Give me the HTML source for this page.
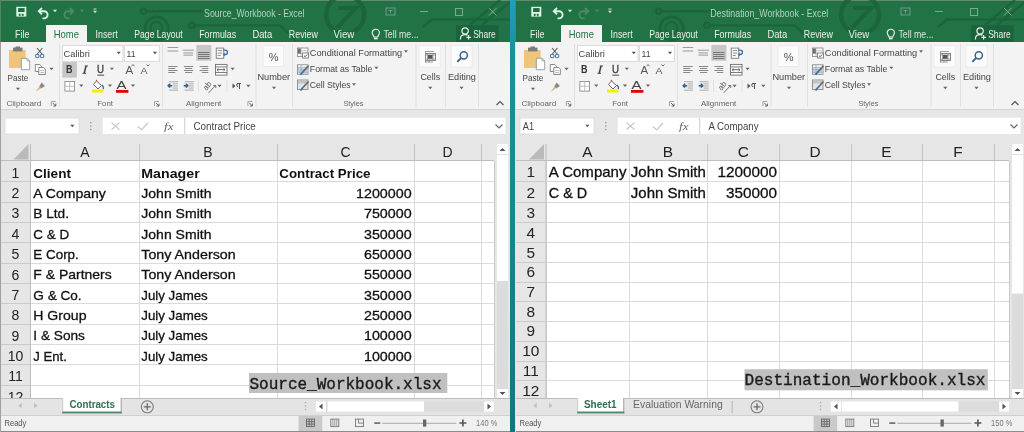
<!DOCTYPE html><html><head><meta charset="utf-8"><style>html,body{margin:0;padding:0;width:1024px;height:432px;overflow:hidden;background:#1b8a9c;font-family:"Liberation Sans",sans-serif}svg{display:block;will-change:transform}</style></head><body><div style="position:absolute;left:0;top:0;width:1024px;height:432px;overflow:hidden;filter:blur(0.4px)"><div style="position:absolute;left:510px;top:0;width:5px;height:432px;background:linear-gradient(#22a0b5,#1e8f9a 12%,#1a8a90 37%,#177480)"></div><svg style="position:absolute;left:0;top:0" width="510" height="432" viewBox="0 0 510 432"><rect x="0" y="0" width="510" height="42" fill="#217346" /><rect x="0" y="0" width="510" height="1" fill="#5e8d71" /><rect x="0" y="1" width="510" height="1" fill="#2a6a47" /><rect x="0" y="0" width="1" height="42" fill="#4f8466" /><g stroke="#1b6139" stroke-width="2.4" fill="none" opacity="0.8"><circle cx="143.5" cy="11.3" r="2.6"/><path d="M146 11.3 H204"/><circle cx="191.8" cy="25.4" r="2.6"/><path d="M194.4 25.4 H280 L296 41"/><circle cx="156.6" cy="28.5" r="11.6" stroke-width="2.8"/><circle cx="156.4" cy="28" r="6" stroke-width="2"/><circle cx="345.1" cy="14.6" r="19" stroke-width="4.5"/><path d="M338 8 H356 L337 28" stroke-width="4"/><path d="M423 27 L432 19.5 H510"/><path d="M470 25 L500 0 M482 25 L510 2"/></g><rect x="16.3" y="6.8" width="10" height="9.8" fill="#dcf5e5"/><rect x="18.1" y="8.1" width="6.5" height="3.9" fill="#1f6a42"/><rect x="18.8" y="13.8" width="1.8" height="2.1" fill="#1f6a42"/><rect x="21.8" y="13.8" width="1.8" height="2.1" fill="#1f6a42"/><g transform="translate(37,7)"><path d="M2.5 4.2 H7 A3.6 3.6 0 0 1 7 11.4 H5.5" fill="none" stroke="#dcf5e5" stroke-width="1.9"/><path d="M5 1 L1.8 4.2 L5 7.4" fill="none" stroke="#dcf5e5" stroke-width="1.9"/></g><path d="M52.9 9.8 H57.1 L55 12.2Z" fill="#d8e8de"/><g transform="translate(63,7)"><path d="M9.5 4.2 H5 A3.6 3.6 0 0 0 5 11.4 H6.5" fill="none" stroke="#4c8b66" stroke-width="1.9"/><path d="M7 1 L10.2 4.2 L7 7.4" fill="none" stroke="#4c8b66" stroke-width="1.9"/></g><path d="M79.9 9.8 H84.1 L82 12.2Z" fill="#4c8b66"/><rect x="93.5" y="8.5" width="3" height="1" fill="#cfe0d6" /><path d="M93.0 10.8 H97.0 L95 13.2Z" fill="#cfe0d6"/><text x="204.10" y="17.00" font-family="'Liberation Sans'" font-size="10.5" fill="#b3d3be" textLength="100.40" lengthAdjust="spacingAndGlyphs" >Source_Workbook - Excel</text><rect x="386" y="8" width="9" height="7" fill="none" stroke="#6c9e80" stroke-width="1"/><path d="M388.5 10.5 H392.5 M390.5 10.5 V13.5" stroke="#6c9e80"/><rect x="420" y="11" width="8" height="1" fill="#7aa98c" /><rect x="455.5" y="8.5" width="7" height="7" fill="none" stroke="#7aa98c" stroke-width="1"/><path d="M489 8 L496.5 15.5 M496.5 8 L489 15.5" stroke="#7aa98c" stroke-width="1"/><rect x="46" y="25" width="41" height="17" fill="#f3f3f3" /><text x="15.10" y="37.70" font-family="'Liberation Sans'" font-size="10.2" fill="#e9f2ec" textLength="14.40" lengthAdjust="spacingAndGlyphs" >File</text><text x="95.50" y="37.70" font-family="'Liberation Sans'" font-size="10.2" fill="#e9f2ec" textLength="22.20" lengthAdjust="spacingAndGlyphs" >Insert</text><text x="134.30" y="37.70" font-family="'Liberation Sans'" font-size="10.2" fill="#e9f2ec" textLength="48.40" lengthAdjust="spacingAndGlyphs" >Page Layout</text><text x="199.20" y="37.70" font-family="'Liberation Sans'" font-size="10.2" fill="#e9f2ec" textLength="37.00" lengthAdjust="spacingAndGlyphs" >Formulas</text><text x="252.40" y="37.70" font-family="'Liberation Sans'" font-size="10.2" fill="#e9f2ec" textLength="19.80" lengthAdjust="spacingAndGlyphs" >Data</text><text x="288.80" y="37.70" font-family="'Liberation Sans'" font-size="10.2" fill="#e9f2ec" textLength="29.10" lengthAdjust="spacingAndGlyphs" >Review</text><text x="333.50" y="37.70" font-family="'Liberation Sans'" font-size="10.2" fill="#e9f2ec" textLength="20.80" lengthAdjust="spacingAndGlyphs" >View</text><text x="53.80" y="37.70" font-family="'Liberation Sans'" font-size="10.2" fill="#217346" textLength="25.20" lengthAdjust="spacingAndGlyphs" >Home</text><g transform="translate(371.6,28.6)"><path d="M4.2 0.6 A3.6 3.6 0 0 1 7.8 4.2 C7.8 6 6.3 6.8 6.1 8.4 H2.3 C2.1 6.8 0.6 6 0.6 4.2 A3.6 3.6 0 0 1 4.2 0.6Z" fill="none" stroke="#e9f2ec" stroke-width="1.1"/><rect x="2.4" y="9" width="3.6" height="1.8" fill="#e9f2ec"/></g><text x="383.50" y="37.70" font-family="'Liberation Sans'" font-size="10.2" fill="#d9e8de" textLength="35.00" lengthAdjust="spacingAndGlyphs" >Tell me...</text><rect x="456" y="25.3" width="42.5" height="16.7" fill="#1a633d" /><g transform="translate(459.6,27)"><circle cx="5.5" cy="4" r="3.2" fill="none" stroke="#e9f2ec" stroke-width="1.2"/><path d="M0.8 12.4 C0.8 8.6 2.8 7.6 5.5 7.6 C6.6 7.6 7.4 7.8 8 8.1" fill="none" stroke="#e9f2ec" stroke-width="1.2"/><path d="M9 8 V12.6 M6.8 10.3 H11.4" stroke="#e9f2ec" stroke-width="1.2"/></g><text x="473.20" y="37.80" font-family="'Liberation Sans'" font-size="10.2" fill="#e3f5e9" textLength="22.60" lengthAdjust="spacingAndGlyphs" >Share</text><rect x="0" y="42" width="510" height="67" fill="#f3f3f3" /><rect x="0" y="109" width="510" height="1" fill="#d5d5d5" /><rect x="59" y="44" width="1" height="63" fill="#e0e0e0" /><rect x="162" y="44" width="1" height="63" fill="#e0e0e0" /><rect x="255.5" y="44" width="1" height="63" fill="#e0e0e0" /><rect x="292" y="44" width="1" height="63" fill="#e0e0e0" /><rect x="415.5" y="44" width="1" height="63" fill="#e0e0e0" /><rect x="445" y="44" width="1" height="63" fill="#e0e0e0" /><rect x="478" y="44" width="1" height="63" fill="#e0e0e0" /><rect x="9" y="50" width="16.6" height="18" fill="#efc57c" /><rect x="13" y="47.6" width="9.5" height="3.8" fill="#7a7a7a" /><rect x="15.5" y="46.5" width="4.5" height="2" fill="#7a7a7a" /><path d="M21.3 58.3 H27 L29.7 61 V69.7 H21.3Z" fill="#fff" stroke="#8a8a8a" stroke-width="0.8"/><path d="M27 58.3 V61 H29.7" fill="none" stroke="#8a8a8a" stroke-width="0.7"/><text x="7.50" y="80.75" font-family="'Liberation Sans'" font-size="9.3" fill="#444" textLength="20.80" lengthAdjust="spacingAndGlyphs" >Paste</text><path d="M15.9 87.8 H20.1 L18 90.2Z" fill="#666"/><g transform="translate(35,48)"><path d="M2 0 L7.5 6.5 M7.4 0 L1.9 6.5" stroke="#5a5a5a" stroke-width="1.1"/><circle cx="2.3" cy="8" r="1.8" fill="none" stroke="#4d79a8" stroke-width="1.1"/><circle cx="7.1" cy="8" r="1.8" fill="none" stroke="#4d79a8" stroke-width="1.1"/></g><g transform="translate(34.8,64)"><path d="M0.5 0.5 H5 L6.5 2 V7.5 H0.5Z" fill="#fff" stroke="#7a7a7a" stroke-width="0.9"/><path d="M4 3.5 H9 L10.5 5 V10.5 H4Z" fill="#fff" stroke="#7a7a7a" stroke-width="0.9"/><path d="M5.5 6.5 H9 M5.5 8.5 H9" stroke="#aaa" stroke-width="0.8"/></g><path d="M49.4 67.8 H53.6 L51.5 70.2Z" fill="#666"/><g transform="translate(35.6,82)"><path d="M6 0.5 L9.4 3.9 L5.5 6.5 L3.5 4.5Z" fill="#8a8a8a"/><path d="M0.5 9.5 L3.5 4.5 L5.5 6.5Z" fill="#e9c98f"/><path d="M1.5 8.5 L4 5.5" stroke="#cfa860" stroke-width="0.8"/></g><text x="6.40" y="105.80" font-family="'Liberation Sans'" font-size="8" fill="#666" textLength="35.00" lengthAdjust="spacingAndGlyphs" >Clipboard</text><path d="M51.3 101.5 H55.8 M51.3 101.5 V106" stroke="#9a9a9a" stroke-width="0.9" fill="none"/><path d="M52.8 103 L55.8 106 M55.8 103.6 V106 H53.4" stroke="#666" stroke-width="1" fill="none"/><path d="M154.5 101.5 H159 M154.5 101.5 V106" stroke="#9a9a9a" stroke-width="0.9" fill="none"/><path d="M156 103 L159 106 M159 103.6 V106 H156.6" stroke="#666" stroke-width="1" fill="none"/><path d="M247.9 101.5 H252.4 M247.9 101.5 V106" stroke="#9a9a9a" stroke-width="0.9" fill="none"/><path d="M249.4 103 L252.4 106 M252.4 103.6 V106 H250.0" stroke="#666" stroke-width="1" fill="none"/><rect x="62.5" y="45.5" width="60.5" height="15.9" fill="#fff" stroke="#dadada" stroke-width="1"/><rect x="124.4" y="45.5" width="35" height="15.9" fill="#fff" stroke="#dadada" stroke-width="1"/><text x="63.50" y="56.75" font-family="'Liberation Sans'" font-size="9.5" fill="#444" textLength="26.40" lengthAdjust="spacingAndGlyphs" >Calibri</text><path d="M116.65 51.8 H120.85 L118.75 54.2Z" fill="#555"/><text x="126.50" y="56.75" font-family="'Liberation Sans'" font-size="9.5" fill="#444" textLength="9.00" lengthAdjust="spacingAndGlyphs" >11</text><path d="M152.9 51.8 H157.1 L155 54.2Z" fill="#555"/><rect x="62.25" y="62" width="14.65" height="15.6" fill="#c6c6c6" /><text x="66.00" y="73.25" font-family="'Liberation Sans'" font-size="10" fill="#333" font-weight="700" textLength="6.50" lengthAdjust="spacingAndGlyphs" >B</text><path d="M86 66 L84.2 73.3" stroke="#444" stroke-width="1.5"/><path d="M84.8 66 H88 M82.5 73.3 H86" stroke="#444" stroke-width="1"/><text x="97.00" y="73.30" font-family="'Liberation Sans'" font-size="10.6" fill="#3a3a3a" textLength="7.00" lengthAdjust="spacingAndGlyphs" stroke="#3a3a3a" stroke-width="0.3">U</text><rect x="97.3" y="74.6" width="6.8" height="1.1" fill="#555" /><path d="M109.80000000000001 67.7 H114.0 L111.9 70.10000000000001Z" fill="#666"/><text x="125.50" y="73.50" font-family="'Liberation Sans'" font-size="10.2" fill="#555" textLength="7.60" lengthAdjust="spacingAndGlyphs" >A</text><path d="M131.5 66 L133 64.6 L134.5 66" stroke="#555" fill="none" stroke-width="0.9"/><text x="140.50" y="73.50" font-family="'Liberation Sans'" font-size="9.2" fill="#555" textLength="7.00" lengthAdjust="spacingAndGlyphs" >A</text><path d="M146.5 64.5 L148 66 L149.5 64.5" stroke="#555" fill="none" stroke-width="0.9"/><rect x="64.9" y="81.5" width="9.6" height="9.6" fill="#fff" stroke="#8c8c8c" stroke-width="0.9"/><path d="M69.7 81.5 V91.1 M64.9 86.3 H74.5" stroke="#b8b8b8" stroke-width="0.9"/><path d="M79.15 84.55 H83.35 L81.25 86.95Z" fill="#666"/><g transform="translate(92,79.5)"><path d="M4.5 1.5 L9.5 6 L6 9.5 L1.5 5Z" fill="#fff" stroke="#6a6a6a" stroke-width="1"/><path d="M4.5 1.5 V0.3" stroke="#c04040" stroke-width="1.2"/><path d="M10 5.5 C11.8 7.5 12 8.5 11 9.5" fill="none" stroke="#3b6ea5" stroke-width="1.3"/></g><rect x="92" y="89.5" width="11.5" height="3" fill="#f2f200" /><path d="M107.9 84.55 H112.1 L110 86.95Z" fill="#666"/><text x="116.40" y="88.90" font-family="'Liberation Sans'" font-size="10.5" fill="#444" textLength="10.00" lengthAdjust="spacingAndGlyphs" >A</text><rect x="116" y="90" width="12.4" height="2.8" fill="#e30000" /><path d="M130.9 84.55 H135.1 L133 86.95Z" fill="#666"/><text x="97.30" y="105.80" font-family="'Liberation Sans'" font-size="8" fill="#666" textLength="15.60" lengthAdjust="spacingAndGlyphs" >Font</text><rect x="167.6" y="47" width="10.6" height="1" fill="#9a9a9a"/><rect x="167.6" y="50.5" width="10.6" height="1" fill="#9a9a9a"/><rect x="182.6" y="49.7" width="11.3" height="1" fill="#999"/><rect x="183.4" y="52.4" width="9.7" height="1" fill="#999"/><rect x="183.4" y="54.6" width="9.7" height="1" fill="#999"/><rect x="196.4" y="45" width="15" height="15.75" fill="#c6c6c6" /><rect x="198" y="52" width="11.5" height="1" fill="#777"/><rect x="198" y="54" width="11.5" height="1" fill="#777"/><rect x="198" y="56" width="11.5" height="1" fill="#777"/><rect x="198" y="58" width="11.5" height="1" fill="#777"/><g transform="translate(215.75,47.6)"><rect x="0.5" y="0.5" width="7.5" height="10.2" fill="#fff" stroke="#7a7a7a" stroke-width="0.9"/><path d="M2 3 H6.5 M2 5.5 H6.5 M2 8 H5" stroke="#7a7a7a" stroke-width="0.9"/><path d="M7.5 2.5 H9.5 A2.2 2.2 0 0 1 9.5 6.9 H7.8" fill="none" stroke="#3b6ea5" stroke-width="1.3"/><path d="M9 5.5 L7.5 6.9 L9 8.3" fill="none" stroke="#3b6ea5" stroke-width="1"/></g><rect x="168.25" y="66" width="9.4" height="1" fill="#888"/><rect x="168.25" y="68" width="7" height="1" fill="#888"/><rect x="168.25" y="70" width="9.4" height="1" fill="#888"/><rect x="168.25" y="72" width="7" height="1" fill="#888"/><rect x="183.9" y="66" width="9.4" height="1" fill="#888"/><rect x="185.1" y="68" width="6.999999999999999" height="1" fill="#888"/><rect x="183.9" y="70" width="9.4" height="1" fill="#888"/><rect x="185.1" y="72" width="6.999999999999999" height="1" fill="#888"/><rect x="199.5" y="66" width="8.8" height="1" fill="#888"/><rect x="201.9" y="68" width="6.4" height="1" fill="#888"/><rect x="199.5" y="70" width="8.8" height="1" fill="#888"/><rect x="201.9" y="72" width="6.4" height="1" fill="#888"/><g transform="translate(215,63.9)"><rect x="0.5" y="0.5" width="11.5" height="10.7" fill="#fff" stroke="#6e6e6e" stroke-width="0.9"/><path d="M0.5 3 H12 M0.5 8.6 H12" stroke="#6e6e6e" stroke-width="0.9"/><path d="M2.5 5.8 H9.5" stroke="#555" stroke-width="0.9"/><path d="M3.5 4.5 L2 5.8 L3.5 7.1 M8.5 4.5 L10 5.8 L8.5 7.1" fill="none" stroke="#555" stroke-width="0.9"/></g><path d="M230.5 67.8 H234.7 L232.6 70.2Z" fill="#666"/><g transform="translate(167,80.75)"><rect x="2" y="0.5" width="9" height="1" fill="#aaa"/><rect x="6" y="2.6" width="5" height="1" fill="#aaa"/><rect x="6" y="4.7" width="5" height="1" fill="#aaa"/><rect x="6" y="6.8" width="5" height="1" fill="#aaa"/><rect x="2" y="8.9" width="9" height="1" fill="#aaa"/><circle cx="3.3" cy="4.9" r="3" fill="#dfe8f2"/><path d="M5.2 4.9 H1.3 M3.1 3 L1.2 4.9 L3.1 6.8" fill="none" stroke="#3d5f86" stroke-width="1.5"/></g><g transform="translate(182.6,80.75)"><rect x="2" y="0.5" width="9" height="1" fill="#aaa"/><rect x="6" y="2.6" width="5" height="1" fill="#aaa"/><rect x="6" y="4.7" width="5" height="1" fill="#aaa"/><rect x="6" y="6.8" width="5" height="1" fill="#aaa"/><rect x="2" y="8.9" width="9" height="1" fill="#aaa"/><circle cx="3.3" cy="4.9" r="3" fill="#dfe8f2"/><path d="M1.2 4.9 H5.1 M3.3 3 L5.2 4.9 L3.3 6.8" fill="none" stroke="#3d5f86" stroke-width="1.5"/></g><rect x="198" y="80" width="1" height="12" fill="#e2e2e2" /><rect x="226.4" y="80" width="1" height="12" fill="#e2e2e2" /><text x="0" y="0" font-family="Liberation Sans" font-size="8" fill="#555" transform="translate(206.5,91) rotate(-50)">ab</text><path d="M208.5 93 L215.5 85.5" stroke="#666" stroke-width="0.9"/><path d="M213.3 85.5 H215.8 V88" fill="none" stroke="#666" stroke-width="0.9"/><path d="M217.4 84.8 H221.6 L219.5 87.2Z" fill="#666"/><g transform="translate(232,83)"><path d="M0.5 0.5 L3.5 3 L0.5 5.5Z" fill="#555"/><path d="M5 0.5 H9 M7.5 0.5 V6 M6.3 0.5 A1.6 1.6 0 0 0 6.3 3.7" stroke="#555" stroke-width="1" fill="none"/></g><path d="M246.15 84.8 H250.35 L248.25 87.2Z" fill="#666"/><text x="186.00" y="105.80" font-family="'Liberation Sans'" font-size="8" fill="#666" textLength="35.30" lengthAdjust="spacingAndGlyphs" >Alignment</text><rect x="263" y="45.8" width="20.5" height="20.6" fill="#fbfbfb" stroke="#e8e8e8" stroke-width="0.8"/><text x="268.70" y="60.70" font-family="'Liberation Sans'" font-size="10.8" fill="#555" textLength="9.80" lengthAdjust="spacingAndGlyphs" >%</text><text x="257.40" y="79.50" font-family="'Liberation Sans'" font-size="9.3" fill="#444" textLength="32.80" lengthAdjust="spacingAndGlyphs" >Number</text><path d="M271.9 86.8 H276.1 L274 89.2Z" fill="#666"/><g transform="translate(297,47.5)"><rect x="0.5" y="0.5" width="10.5" height="8.5" fill="#fff" stroke="#8a8a8a" stroke-width="0.9"/><path d="M0.5 3.3 H11 M0.5 6.1 H11 M4 0.5 V9" stroke="#b0b0b0" stroke-width="0.8"/><rect x="1" y="1" width="2.8" height="5" fill="#6e6e6e"/><rect x="5.5" y="5.5" width="6" height="5" fill="#fff" stroke="#7a7a7a" stroke-width="0.9"/><path d="M7 8.2 L8.2 9.2 L10.2 7" fill="none" stroke="#444" stroke-width="0.9"/></g><g transform="translate(297,64.3)"><rect x="0.5" y="0.5" width="10.5" height="9.5" fill="#fff" stroke="#8a8a8a" stroke-width="0.9"/><rect x="1" y="3" width="9.5" height="6.5" fill="#c9d6e6"/><path d="M0.5 3 H11 M0.5 5.5 H11 M0.5 8 H11 M4 0.5 V10" stroke="#9aa7b8" stroke-width="0.7"/><path d="M11.5 1.5 L5.5 8" stroke="#6a6a6a" stroke-width="1.8"/><path d="M5.5 8 L3.5 10.5" stroke="#3b6ea5" stroke-width="1.8"/></g><g transform="translate(297,79.5)"><rect x="0.5" y="0.5" width="10.5" height="9.5" fill="#e4e4e4" stroke="#8a8a8a" stroke-width="0.9"/><rect x="1" y="1" width="9.5" height="3" fill="#c4c4c4"/><path d="M11.5 2 L5.5 8.5" stroke="#6a6a6a" stroke-width="1.8"/><path d="M5.5 8.5 L3.5 11" stroke="#3b6ea5" stroke-width="1.8"/></g><text x="309.80" y="56.00" font-family="'Liberation Sans'" font-size="9.3" fill="#444" textLength="92.40" lengthAdjust="spacingAndGlyphs" >Conditional Formatting</text><path d="M404.0 50.3 H408.0 L406 52.7Z" fill="#666"/><text x="309.80" y="71.80" font-family="'Liberation Sans'" font-size="9.3" fill="#444" textLength="62.60" lengthAdjust="spacingAndGlyphs" >Format as Table</text><path d="M374.3 66.8 H378.3 L376.3 69.2Z" fill="#666"/><text x="309.70" y="88.30" font-family="'Liberation Sans'" font-size="9.3" fill="#444" textLength="41.00" lengthAdjust="spacingAndGlyphs" >Cell Styles</text><path d="M352.0 83.3 H356.0 L354 85.7Z" fill="#666"/><text x="343.40" y="106.00" font-family="'Liberation Sans'" font-size="8" fill="#666" textLength="20.00" lengthAdjust="spacingAndGlyphs" >Styles</text><rect x="419" y="45.5" width="21.25" height="21.5" fill="#fbfbfb" stroke="#e8e8e8" stroke-width="0.8"/><rect x="425.5" y="53.5" width="10" height="7" fill="#fff" stroke="#777" stroke-width="0.9"/><path d="M425 51.5 H434 M425.5 51 V62.5 M425 62 H433 M429 60.5 V62.5 M425 55 H435.5 M425 59 H435.5 M427.5 53.5 V60.5 M433 53.5 V60.5" fill="none" stroke="#8a8a8a" stroke-width="0.8"/><rect x="428" y="55" width="4.5" height="3.8" fill="#4f5862"/><text x="420.40" y="79.50" font-family="'Liberation Sans'" font-size="9.3" fill="#444" textLength="19.70" lengthAdjust="spacingAndGlyphs" >Cells</text><path d="M428.15 86.8 H432.35 L430.25 89.2Z" fill="#666"/><rect x="451" y="45.5" width="21.1" height="21.5" fill="#fbfbfb" stroke="#e8e8e8" stroke-width="0.8"/><g transform="translate(456.5,51)"><circle cx="7.3" cy="4.3" r="3.6" fill="none" stroke="#3f5f85" stroke-width="1.5"/><path d="M4.6 7 L0.8 10.8" stroke="#3f5f85" stroke-width="1.8"/></g><text x="447.90" y="79.50" font-family="'Liberation Sans'" font-size="9.3" fill="#444" textLength="28.10" lengthAdjust="spacingAndGlyphs" >Editing</text><path d="M459.4 86.8 H463.6 L461.5 89.2Z" fill="#666"/><path d="M496.5 105 L500 101.5 L503.5 105" fill="none" stroke="#555" stroke-width="1.2"/><rect x="0" y="110" width="510" height="27" fill="#e6e6e6" /><rect x="5" y="118" width="74" height="16" fill="#fff" stroke="#d9d9d9" stroke-width="0.8"/><path d="M70.2 124.8 H74.39999999999999 L72.3 127.2Z" fill="#555"/><circle cx="90.8" cy="122.5" r="0.8" fill="#999"/><circle cx="90.8" cy="126" r="0.8" fill="#999"/><circle cx="90.8" cy="129.5" r="0.8" fill="#999"/><rect x="102.7" y="117.7" width="81.6" height="16.3" fill="#fff"/><path d="M111.5 122.6 L119.5 129.7 M119.5 122.6 L111.5 129.7" stroke="#c2c2c2" stroke-width="1.1"/><path d="M138 126.5 L141.5 129.8 L148 123" fill="none" stroke="#c2c2c2" stroke-width="1.1"/><text x="164" y="130" font-family="Liberation Serif" font-style="italic" font-size="11" fill="#666" textLength="9.5" lengthAdjust="spacingAndGlyphs">fx</text><rect x="184" y="117.7" width="1" height="16.3" fill="#d8d8d8" /><rect x="185.5" y="117.7" width="320" height="16.3" fill="#fff" /><text x="193.50" y="129.70" font-family="'Liberation Sans'" font-size="10.4" fill="#444" textLength="62.30" lengthAdjust="spacingAndGlyphs" >Contract Price</text><path d="M495.5 124.5 L499 128 L502.5 124.5" fill="none" stroke="#666" stroke-width="1.2"/><rect x="0" y="134" width="510" height="0" fill="#e6e6e6" /><rect x="0" y="137" width="510" height="24" fill="#e6e6e6" /><rect x="0" y="161" width="31" height="237" fill="#e6e6e6" /><rect x="31" y="161" width="463" height="237" fill="#ffffff" /><rect x="31" y="181" width="463" height="1" fill="#dadada" /><rect x="0" y="181" width="30" height="1" fill="#cbcbcb" /><rect x="31" y="202" width="463" height="1" fill="#dadada" /><rect x="0" y="202" width="30" height="1" fill="#cbcbcb" /><rect x="31" y="222" width="463" height="1" fill="#dadada" /><rect x="0" y="222" width="30" height="1" fill="#cbcbcb" /><rect x="31" y="242" width="463" height="1" fill="#dadada" /><rect x="0" y="242" width="30" height="1" fill="#cbcbcb" /><rect x="31" y="263" width="463" height="1" fill="#dadada" /><rect x="0" y="263" width="30" height="1" fill="#cbcbcb" /><rect x="31" y="283" width="463" height="1" fill="#dadada" /><rect x="0" y="283" width="30" height="1" fill="#cbcbcb" /><rect x="31" y="303" width="463" height="1" fill="#dadada" /><rect x="0" y="303" width="30" height="1" fill="#cbcbcb" /><rect x="31" y="324" width="463" height="1" fill="#dadada" /><rect x="0" y="324" width="30" height="1" fill="#cbcbcb" /><rect x="31" y="344" width="463" height="1" fill="#dadada" /><rect x="0" y="344" width="30" height="1" fill="#cbcbcb" /><rect x="31" y="364" width="463" height="1" fill="#dadada" /><rect x="0" y="364" width="30" height="1" fill="#cbcbcb" /><rect x="31" y="385" width="463" height="1" fill="#dadada" /><rect x="0" y="385" width="30" height="1" fill="#cbcbcb" /><rect x="139" y="161" width="1" height="237" fill="#dadada" /><rect x="139" y="144" width="1" height="17" fill="#c4c4c4" /><rect x="277" y="161" width="1" height="237" fill="#dadada" /><rect x="277" y="144" width="1" height="17" fill="#c4c4c4" /><rect x="414" y="161" width="1" height="237" fill="#dadada" /><rect x="414" y="144" width="1" height="17" fill="#c4c4c4" /><rect x="481" y="161" width="1" height="237" fill="#dadada" /><rect x="481" y="144" width="1" height="17" fill="#c4c4c4" /><rect x="0" y="160" width="494" height="1" fill="#bfbfbf" /><rect x="30" y="144" width="1" height="254" fill="#bdbdbd" /><path d="M28.5 144 V159.5 H13.5Z" fill="#bababa"/><text x="85.00" y="156.80" font-family="'Liberation Sans'" font-size="14" fill="#222" text-anchor="middle" >A</text><text x="208.00" y="156.80" font-family="'Liberation Sans'" font-size="14" fill="#222" text-anchor="middle" >B</text><text x="345.50" y="156.80" font-family="'Liberation Sans'" font-size="14" fill="#222" text-anchor="middle" >C</text><text x="447.50" y="156.80" font-family="'Liberation Sans'" font-size="14" fill="#222" text-anchor="middle" >D</text><text x="15.50" y="177.75" font-family="'Liberation Sans'" font-size="14" fill="#222" text-anchor="middle" >1</text><text x="15.50" y="198.10" font-family="'Liberation Sans'" font-size="14" fill="#222" text-anchor="middle" >2</text><text x="15.50" y="218.45" font-family="'Liberation Sans'" font-size="14" fill="#222" text-anchor="middle" >3</text><text x="15.50" y="238.80" font-family="'Liberation Sans'" font-size="14" fill="#222" text-anchor="middle" >4</text><text x="15.50" y="259.15" font-family="'Liberation Sans'" font-size="14" fill="#222" text-anchor="middle" >5</text><text x="15.50" y="279.50" font-family="'Liberation Sans'" font-size="14" fill="#222" text-anchor="middle" >6</text><text x="15.50" y="299.85" font-family="'Liberation Sans'" font-size="14" fill="#222" text-anchor="middle" >7</text><text x="15.50" y="320.20" font-family="'Liberation Sans'" font-size="14" fill="#222" text-anchor="middle" >8</text><text x="15.50" y="340.55" font-family="'Liberation Sans'" font-size="14" fill="#222" text-anchor="middle" >9</text><text x="15.50" y="360.90" font-family="'Liberation Sans'" font-size="14" fill="#222" text-anchor="middle" >10</text><text x="15.50" y="381.25" font-family="'Liberation Sans'" font-size="14" fill="#222" text-anchor="middle" >11</text><text x="15.50" y="401.60" font-family="'Liberation Sans'" font-size="14" fill="#222" text-anchor="middle" >12</text><text x="33.30" y="177.55" font-family="'Liberation Sans'" font-size="13.6" fill="#111" font-weight="700" textLength="37.62" lengthAdjust="spacingAndGlyphs" >Client</text><text x="141.30" y="177.55" font-family="'Liberation Sans'" font-size="13.6" fill="#111" font-weight="700" textLength="58.38" lengthAdjust="spacingAndGlyphs" >Manager</text><text x="279.30" y="177.55" font-family="'Liberation Sans'" font-size="13.6" fill="#111" font-weight="700" textLength="91.22" lengthAdjust="spacingAndGlyphs" >Contract Price</text><text x="33.30" y="197.90" font-family="'Liberation Sans'" font-size="13.6" fill="#111" textLength="72.61" lengthAdjust="spacingAndGlyphs" stroke="#111" stroke-width="0.3">A Company</text><text x="141.30" y="197.90" font-family="'Liberation Sans'" font-size="13.6" fill="#111" textLength="70.16" lengthAdjust="spacingAndGlyphs" stroke="#111" stroke-width="0.3">John Smith</text><text x="356.03" y="197.90" font-family="'Liberation Sans'" font-size="13.6" fill="#111" textLength="55.67" lengthAdjust="spacingAndGlyphs" stroke="#111" stroke-width="0.3">1200000</text><text x="33.30" y="218.25" font-family="'Liberation Sans'" font-size="13.6" fill="#111" textLength="35.67" lengthAdjust="spacingAndGlyphs" stroke="#111" stroke-width="0.3">B Ltd.</text><text x="141.30" y="218.25" font-family="'Liberation Sans'" font-size="13.6" fill="#111" textLength="70.16" lengthAdjust="spacingAndGlyphs" stroke="#111" stroke-width="0.3">John Smith</text><text x="363.98" y="218.25" font-family="'Liberation Sans'" font-size="13.6" fill="#111" textLength="47.72" lengthAdjust="spacingAndGlyphs" stroke="#111" stroke-width="0.3">750000</text><text x="33.30" y="238.60" font-family="'Liberation Sans'" font-size="13.6" fill="#111" textLength="35.81" lengthAdjust="spacingAndGlyphs" stroke="#111" stroke-width="0.3">C &amp; D</text><text x="141.30" y="238.60" font-family="'Liberation Sans'" font-size="13.6" fill="#111" textLength="70.16" lengthAdjust="spacingAndGlyphs" stroke="#111" stroke-width="0.3">John Smith</text><text x="363.98" y="238.60" font-family="'Liberation Sans'" font-size="13.6" fill="#111" textLength="47.72" lengthAdjust="spacingAndGlyphs" stroke="#111" stroke-width="0.3">350000</text><text x="33.30" y="258.95" font-family="'Liberation Sans'" font-size="13.6" fill="#111" textLength="45.52" lengthAdjust="spacingAndGlyphs" stroke="#111" stroke-width="0.3">E Corp.</text><text x="141.30" y="258.95" font-family="'Liberation Sans'" font-size="13.6" fill="#111" textLength="94.34" lengthAdjust="spacingAndGlyphs" stroke="#111" stroke-width="0.3">Tony Anderson</text><text x="363.98" y="258.95" font-family="'Liberation Sans'" font-size="13.6" fill="#111" textLength="47.72" lengthAdjust="spacingAndGlyphs" stroke="#111" stroke-width="0.3">650000</text><text x="33.30" y="279.30" font-family="'Liberation Sans'" font-size="13.6" fill="#111" textLength="78.41" lengthAdjust="spacingAndGlyphs" stroke="#111" stroke-width="0.3">F &amp; Partners</text><text x="141.30" y="279.30" font-family="'Liberation Sans'" font-size="13.6" fill="#111" textLength="94.34" lengthAdjust="spacingAndGlyphs" stroke="#111" stroke-width="0.3">Tony Anderson</text><text x="363.98" y="279.30" font-family="'Liberation Sans'" font-size="13.6" fill="#111" textLength="47.72" lengthAdjust="spacingAndGlyphs" stroke="#111" stroke-width="0.3">550000</text><text x="33.30" y="299.65" font-family="'Liberation Sans'" font-size="13.6" fill="#111" textLength="48.30" lengthAdjust="spacingAndGlyphs" stroke="#111" stroke-width="0.3">G &amp; Co.</text><text x="141.30" y="299.65" font-family="'Liberation Sans'" font-size="13.6" fill="#111" textLength="66.48" lengthAdjust="spacingAndGlyphs" stroke="#111" stroke-width="0.3">July James</text><text x="363.98" y="299.65" font-family="'Liberation Sans'" font-size="13.6" fill="#111" textLength="47.72" lengthAdjust="spacingAndGlyphs" stroke="#111" stroke-width="0.3">350000</text><text x="33.30" y="320.00" font-family="'Liberation Sans'" font-size="13.6" fill="#111" textLength="53.20" lengthAdjust="spacingAndGlyphs" stroke="#111" stroke-width="0.3">H Group</text><text x="141.30" y="320.00" font-family="'Liberation Sans'" font-size="13.6" fill="#111" textLength="66.48" lengthAdjust="spacingAndGlyphs" stroke="#111" stroke-width="0.3">July James</text><text x="363.98" y="320.00" font-family="'Liberation Sans'" font-size="13.6" fill="#111" textLength="47.72" lengthAdjust="spacingAndGlyphs" stroke="#111" stroke-width="0.3">250000</text><text x="33.30" y="340.35" font-family="'Liberation Sans'" font-size="13.6" fill="#111" textLength="51.61" lengthAdjust="spacingAndGlyphs" stroke="#111" stroke-width="0.3">I &amp; Sons</text><text x="141.30" y="340.35" font-family="'Liberation Sans'" font-size="13.6" fill="#111" textLength="66.48" lengthAdjust="spacingAndGlyphs" stroke="#111" stroke-width="0.3">July James</text><text x="363.98" y="340.35" font-family="'Liberation Sans'" font-size="13.6" fill="#111" textLength="47.72" lengthAdjust="spacingAndGlyphs" stroke="#111" stroke-width="0.3">100000</text><text x="33.30" y="360.70" font-family="'Liberation Sans'" font-size="13.6" fill="#111" textLength="33.53" lengthAdjust="spacingAndGlyphs" stroke="#111" stroke-width="0.3">J Ent.</text><text x="141.30" y="360.70" font-family="'Liberation Sans'" font-size="13.6" fill="#111" textLength="66.48" lengthAdjust="spacingAndGlyphs" stroke="#111" stroke-width="0.3">July James</text><text x="363.98" y="360.70" font-family="'Liberation Sans'" font-size="13.6" fill="#111" textLength="47.72" lengthAdjust="spacingAndGlyphs" stroke="#111" stroke-width="0.3">100000</text><rect x="494" y="137" width="16" height="261" fill="#e6e6e6" /><rect x="494" y="161" width="1" height="237" fill="#c9c9c9" /><rect x="497" y="144" width="11" height="10.5" fill="#ffffff" /><rect x="497" y="154.5" width="11" height="0.8" fill="#cfcfcf" /><path d="M499.5 151 L502.5 148 L505.5 151Z" fill="#555"/><rect x="497" y="155" width="11" height="126" fill="#ffffff" /><rect x="497" y="281" width="11" height="108" fill="#dcdcdc" /><rect x="497" y="389" width="11" height="8.8" fill="#ffffff" /><path d="M499.5 392 L502.5 395 L505.5 392Z" fill="#555"/><rect x="249" y="373" width="198.3" height="20" fill="#c0c0c0" /><text x="249.50" y="388.90" font-family="'Liberation Mono'" font-size="16" fill="#1a1a1a" textLength="192.00" lengthAdjust="spacingAndGlyphs" stroke="#1a1a1a" stroke-width="0.35">Source_Workbook.xlsx</text><rect x="0" y="398" width="510" height="17" fill="#e4e4e4" /><rect x="0" y="398" width="510" height="1" fill="#bdbdbd" /><rect x="0" y="415" width="510" height="1" fill="#d0d0d0" /><path d="M21.8 402.8 L18.3 405.6 L21.8 408.4Z" fill="#c2c2c2"/><path d="M34 402.8 L37.5 405.6 L34 408.4Z" fill="#c2c2c2"/><rect x="62.2" y="398" width="59.5" height="15.5" fill="#ffffff" /><rect x="62.2" y="398" width="1" height="15.5" fill="#c8c8c8" /><rect x="120.7" y="398" width="1" height="15.5" fill="#9a9a9a" /><rect x="62.2" y="411.5" width="59.5" height="2" fill="#4f8a6e" /><text x="69.40" y="407.80" font-family="'Liberation Sans'" font-size="10.4" fill="#2f6f4f" font-weight="700" textLength="45.60" lengthAdjust="spacingAndGlyphs" >Contracts</text><circle cx="147.3" cy="406.8" r="6" fill="none" stroke="#7a7a7a" stroke-width="1.1"/><path d="M147.3 403.3 V410.3 M143.8 406.8 H150.8" stroke="#6a6a6a" stroke-width="1.3"/><circle cx="305.5" cy="402.5" r="0.8" fill="#aaa"/><circle cx="305.5" cy="406" r="0.8" fill="#aaa"/><circle cx="305.5" cy="409.5" r="0.8" fill="#aaa"/><rect x="315.8" y="401.4" width="178.2" height="10.2" fill="#dcdcdc" /><rect x="315.8" y="401.4" width="10.2" height="10.2" fill="#ffffff" /><path d="M322.5 403.5 L319 406.5 L322.5 409.5Z" fill="#555"/><rect x="327.6" y="401.4" width="96.39999999999998" height="10.2" fill="#ffffff" /><rect x="484.2" y="401.4" width="9.8" height="10.2" fill="#ffffff" /><path d="M487.5 403.5 L491 406.5 L487.5 409.5Z" fill="#555"/><rect x="0" y="416" width="510" height="15" fill="#f0f0f0" /><text x="4.50" y="425.60" font-family="'Liberation Sans'" font-size="8.2" fill="#555" textLength="21.80" lengthAdjust="spacingAndGlyphs" >Ready</text><rect x="298.6" y="416" width="23.6" height="15" fill="#c9c9c9" /><g transform="translate(306,418.6)"><rect x="0.5" y="0.5" width="8" height="7.5" fill="none" stroke="#666" stroke-width="0.9"/><path d="M0.5 3 H8.5 M0.5 5.5 H8.5 M3.2 0.5 V8 M5.8 0.5 V8" stroke="#666" stroke-width="0.9"/></g><g transform="translate(330.3,418.6)"><rect x="0.5" y="0.5" width="8" height="7.5" fill="none" stroke="#777" stroke-width="0.9"/><path d="M2.5 0.5 V8 M4.5 0.5 V8 M6.5 0.5 V8" stroke="#888" stroke-width="0.8"/></g><g transform="translate(355,418.6)"><rect x="0.5" y="0.5" width="8" height="7.5" fill="none" stroke="#777" stroke-width="0.9"/><path d="M3.5 0.5 V4.5 H8.5" fill="none" stroke="#777" stroke-width="0.9"/></g><rect x="374.3" y="422.3" width="6" height="1.6" fill="#666" /><rect x="382.4" y="422.8" width="74" height="0.9" fill="#a0a0a0" /><rect x="423" y="419.5" width="3.3" height="7.1" fill="#666" /><path d="M462.9 419.5 V426.6 M459.4 423 H466.4" stroke="#555" stroke-width="1.6"/><text x="476.10" y="425.80" font-family="'Liberation Sans'" font-size="8.2" fill="#777" textLength="21.20" lengthAdjust="spacingAndGlyphs" >140 %</text><rect x="0" y="431" width="510" height="1" fill="#8c8c8c" /><rect x="0" y="42" width="1" height="390" fill="#a0a0a0" /></svg><svg style="position:absolute;left:515px;top:0" width="510" height="432" viewBox="0 0 510 432"><rect x="0" y="0" width="510" height="42" fill="#217346" /><rect x="0" y="0" width="510" height="1" fill="#5e8d71" /><rect x="0" y="1" width="510" height="1" fill="#2a6a47" /><rect x="0" y="0" width="1" height="42" fill="#4f8466" /><g stroke="#1b6139" stroke-width="2.4" fill="none" opacity="0.8"><circle cx="143.5" cy="11.3" r="2.6"/><path d="M146 11.3 H204"/><circle cx="191.8" cy="25.4" r="2.6"/><path d="M194.4 25.4 H280 L296 41"/><circle cx="156.6" cy="28.5" r="11.6" stroke-width="2.8"/><circle cx="156.4" cy="28" r="6" stroke-width="2"/><circle cx="345.1" cy="14.6" r="19" stroke-width="4.5"/><path d="M338 8 H356 L337 28" stroke-width="4"/><path d="M423 27 L432 19.5 H510"/><path d="M470 25 L500 0 M482 25 L510 2"/></g><rect x="16.3" y="6.8" width="10" height="9.8" fill="#dcf5e5"/><rect x="18.1" y="8.1" width="6.5" height="3.9" fill="#1f6a42"/><rect x="18.8" y="13.8" width="1.8" height="2.1" fill="#1f6a42"/><rect x="21.8" y="13.8" width="1.8" height="2.1" fill="#1f6a42"/><g transform="translate(37,7)"><path d="M2.5 4.2 H7 A3.6 3.6 0 0 1 7 11.4 H5.5" fill="none" stroke="#dcf5e5" stroke-width="1.9"/><path d="M5 1 L1.8 4.2 L5 7.4" fill="none" stroke="#dcf5e5" stroke-width="1.9"/></g><path d="M52.9 9.8 H57.1 L55 12.2Z" fill="#d8e8de"/><g transform="translate(63,7)"><path d="M9.5 4.2 H5 A3.6 3.6 0 0 0 5 11.4 H6.5" fill="none" stroke="#4c8b66" stroke-width="1.9"/><path d="M7 1 L10.2 4.2 L7 7.4" fill="none" stroke="#4c8b66" stroke-width="1.9"/></g><path d="M79.9 9.8 H84.1 L82 12.2Z" fill="#4c8b66"/><rect x="93.5" y="8.5" width="3" height="1" fill="#cfe0d6" /><path d="M93.0 10.8 H97.0 L95 13.2Z" fill="#cfe0d6"/><text x="195.20" y="17.00" font-family="'Liberation Sans'" font-size="10.5" fill="#b3d3be" textLength="118.10" lengthAdjust="spacingAndGlyphs" >Destination_Workbook - Excel</text><rect x="386" y="8" width="9" height="7" fill="none" stroke="#6c9e80" stroke-width="1"/><path d="M388.5 10.5 H392.5 M390.5 10.5 V13.5" stroke="#6c9e80"/><rect x="420" y="11" width="8" height="1" fill="#7aa98c" /><rect x="455.5" y="8.5" width="7" height="7" fill="none" stroke="#7aa98c" stroke-width="1"/><path d="M489 8 L496.5 15.5 M496.5 8 L489 15.5" stroke="#7aa98c" stroke-width="1"/><rect x="46" y="25" width="41" height="17" fill="#f3f3f3" /><text x="15.10" y="37.70" font-family="'Liberation Sans'" font-size="10.2" fill="#e9f2ec" textLength="14.40" lengthAdjust="spacingAndGlyphs" >File</text><text x="95.50" y="37.70" font-family="'Liberation Sans'" font-size="10.2" fill="#e9f2ec" textLength="22.20" lengthAdjust="spacingAndGlyphs" >Insert</text><text x="134.30" y="37.70" font-family="'Liberation Sans'" font-size="10.2" fill="#e9f2ec" textLength="48.40" lengthAdjust="spacingAndGlyphs" >Page Layout</text><text x="199.20" y="37.70" font-family="'Liberation Sans'" font-size="10.2" fill="#e9f2ec" textLength="37.00" lengthAdjust="spacingAndGlyphs" >Formulas</text><text x="252.40" y="37.70" font-family="'Liberation Sans'" font-size="10.2" fill="#e9f2ec" textLength="19.80" lengthAdjust="spacingAndGlyphs" >Data</text><text x="288.80" y="37.70" font-family="'Liberation Sans'" font-size="10.2" fill="#e9f2ec" textLength="29.10" lengthAdjust="spacingAndGlyphs" >Review</text><text x="333.50" y="37.70" font-family="'Liberation Sans'" font-size="10.2" fill="#e9f2ec" textLength="20.80" lengthAdjust="spacingAndGlyphs" >View</text><text x="53.80" y="37.70" font-family="'Liberation Sans'" font-size="10.2" fill="#217346" textLength="25.20" lengthAdjust="spacingAndGlyphs" >Home</text><g transform="translate(371.6,28.6)"><path d="M4.2 0.6 A3.6 3.6 0 0 1 7.8 4.2 C7.8 6 6.3 6.8 6.1 8.4 H2.3 C2.1 6.8 0.6 6 0.6 4.2 A3.6 3.6 0 0 1 4.2 0.6Z" fill="none" stroke="#e9f2ec" stroke-width="1.1"/><rect x="2.4" y="9" width="3.6" height="1.8" fill="#e9f2ec"/></g><text x="383.50" y="37.70" font-family="'Liberation Sans'" font-size="10.2" fill="#d9e8de" textLength="35.00" lengthAdjust="spacingAndGlyphs" >Tell me...</text><rect x="456" y="25.3" width="42.5" height="16.7" fill="#1a633d" /><g transform="translate(459.6,27)"><circle cx="5.5" cy="4" r="3.2" fill="none" stroke="#e9f2ec" stroke-width="1.2"/><path d="M0.8 12.4 C0.8 8.6 2.8 7.6 5.5 7.6 C6.6 7.6 7.4 7.8 8 8.1" fill="none" stroke="#e9f2ec" stroke-width="1.2"/><path d="M9 8 V12.6 M6.8 10.3 H11.4" stroke="#e9f2ec" stroke-width="1.2"/></g><text x="473.20" y="37.80" font-family="'Liberation Sans'" font-size="10.2" fill="#e3f5e9" textLength="22.60" lengthAdjust="spacingAndGlyphs" >Share</text><rect x="0" y="42" width="510" height="67" fill="#f3f3f3" /><rect x="0" y="109" width="510" height="1" fill="#d5d5d5" /><rect x="59" y="44" width="1" height="63" fill="#e0e0e0" /><rect x="162" y="44" width="1" height="63" fill="#e0e0e0" /><rect x="255.5" y="44" width="1" height="63" fill="#e0e0e0" /><rect x="292" y="44" width="1" height="63" fill="#e0e0e0" /><rect x="415.5" y="44" width="1" height="63" fill="#e0e0e0" /><rect x="445" y="44" width="1" height="63" fill="#e0e0e0" /><rect x="478" y="44" width="1" height="63" fill="#e0e0e0" /><rect x="9" y="50" width="16.6" height="18" fill="#efc57c" /><rect x="13" y="47.6" width="9.5" height="3.8" fill="#7a7a7a" /><rect x="15.5" y="46.5" width="4.5" height="2" fill="#7a7a7a" /><path d="M21.3 58.3 H27 L29.7 61 V69.7 H21.3Z" fill="#fff" stroke="#8a8a8a" stroke-width="0.8"/><path d="M27 58.3 V61 H29.7" fill="none" stroke="#8a8a8a" stroke-width="0.7"/><text x="7.50" y="80.75" font-family="'Liberation Sans'" font-size="9.3" fill="#444" textLength="20.80" lengthAdjust="spacingAndGlyphs" >Paste</text><path d="M15.9 87.8 H20.1 L18 90.2Z" fill="#666"/><g transform="translate(35,48)"><path d="M2 0 L7.5 6.5 M7.4 0 L1.9 6.5" stroke="#5a5a5a" stroke-width="1.1"/><circle cx="2.3" cy="8" r="1.8" fill="none" stroke="#4d79a8" stroke-width="1.1"/><circle cx="7.1" cy="8" r="1.8" fill="none" stroke="#4d79a8" stroke-width="1.1"/></g><g transform="translate(34.8,64)"><path d="M0.5 0.5 H5 L6.5 2 V7.5 H0.5Z" fill="#fff" stroke="#7a7a7a" stroke-width="0.9"/><path d="M4 3.5 H9 L10.5 5 V10.5 H4Z" fill="#fff" stroke="#7a7a7a" stroke-width="0.9"/><path d="M5.5 6.5 H9 M5.5 8.5 H9" stroke="#aaa" stroke-width="0.8"/></g><path d="M49.4 67.8 H53.6 L51.5 70.2Z" fill="#666"/><g transform="translate(35.6,82)"><path d="M6 0.5 L9.4 3.9 L5.5 6.5 L3.5 4.5Z" fill="#8a8a8a"/><path d="M0.5 9.5 L3.5 4.5 L5.5 6.5Z" fill="#e9c98f"/><path d="M1.5 8.5 L4 5.5" stroke="#cfa860" stroke-width="0.8"/></g><text x="6.40" y="105.80" font-family="'Liberation Sans'" font-size="8" fill="#666" textLength="35.00" lengthAdjust="spacingAndGlyphs" >Clipboard</text><path d="M51.3 101.5 H55.8 M51.3 101.5 V106" stroke="#9a9a9a" stroke-width="0.9" fill="none"/><path d="M52.8 103 L55.8 106 M55.8 103.6 V106 H53.4" stroke="#666" stroke-width="1" fill="none"/><path d="M154.5 101.5 H159 M154.5 101.5 V106" stroke="#9a9a9a" stroke-width="0.9" fill="none"/><path d="M156 103 L159 106 M159 103.6 V106 H156.6" stroke="#666" stroke-width="1" fill="none"/><path d="M247.9 101.5 H252.4 M247.9 101.5 V106" stroke="#9a9a9a" stroke-width="0.9" fill="none"/><path d="M249.4 103 L252.4 106 M252.4 103.6 V106 H250.0" stroke="#666" stroke-width="1" fill="none"/><rect x="62.5" y="45.5" width="60.5" height="15.9" fill="#fff" stroke="#dadada" stroke-width="1"/><rect x="124.4" y="45.5" width="35" height="15.9" fill="#fff" stroke="#dadada" stroke-width="1"/><text x="63.50" y="56.75" font-family="'Liberation Sans'" font-size="9.5" fill="#444" textLength="26.40" lengthAdjust="spacingAndGlyphs" >Calibri</text><path d="M116.65 51.8 H120.85 L118.75 54.2Z" fill="#555"/><text x="126.50" y="56.75" font-family="'Liberation Sans'" font-size="9.5" fill="#444" textLength="9.00" lengthAdjust="spacingAndGlyphs" >11</text><path d="M152.9 51.8 H157.1 L155 54.2Z" fill="#555"/><text x="66.00" y="73.25" font-family="'Liberation Sans'" font-size="10" fill="#333" font-weight="700" textLength="6.50" lengthAdjust="spacingAndGlyphs" >B</text><path d="M86 66 L84.2 73.3" stroke="#444" stroke-width="1.5"/><path d="M84.8 66 H88 M82.5 73.3 H86" stroke="#444" stroke-width="1"/><text x="97.00" y="73.30" font-family="'Liberation Sans'" font-size="10.6" fill="#3a3a3a" textLength="7.00" lengthAdjust="spacingAndGlyphs" stroke="#3a3a3a" stroke-width="0.3">U</text><rect x="97.3" y="74.6" width="6.8" height="1.1" fill="#555" /><path d="M109.80000000000001 67.7 H114.0 L111.9 70.10000000000001Z" fill="#666"/><text x="125.50" y="73.50" font-family="'Liberation Sans'" font-size="10.2" fill="#555" textLength="7.60" lengthAdjust="spacingAndGlyphs" >A</text><path d="M131.5 66 L133 64.6 L134.5 66" stroke="#555" fill="none" stroke-width="0.9"/><text x="140.50" y="73.50" font-family="'Liberation Sans'" font-size="9.2" fill="#555" textLength="7.00" lengthAdjust="spacingAndGlyphs" >A</text><path d="M146.5 64.5 L148 66 L149.5 64.5" stroke="#555" fill="none" stroke-width="0.9"/><rect x="64.9" y="81.5" width="9.6" height="9.6" fill="#fff" stroke="#8c8c8c" stroke-width="0.9"/><path d="M69.7 81.5 V91.1 M64.9 86.3 H74.5" stroke="#b8b8b8" stroke-width="0.9"/><path d="M79.15 84.55 H83.35 L81.25 86.95Z" fill="#666"/><g transform="translate(92,79.5)"><path d="M4.5 1.5 L9.5 6 L6 9.5 L1.5 5Z" fill="#fff" stroke="#6a6a6a" stroke-width="1"/><path d="M4.5 1.5 V0.3" stroke="#c04040" stroke-width="1.2"/><path d="M10 5.5 C11.8 7.5 12 8.5 11 9.5" fill="none" stroke="#3b6ea5" stroke-width="1.3"/></g><rect x="92" y="89.5" width="11.5" height="3" fill="#f2f200" /><path d="M107.9 84.55 H112.1 L110 86.95Z" fill="#666"/><text x="116.40" y="88.90" font-family="'Liberation Sans'" font-size="10.5" fill="#444" textLength="10.00" lengthAdjust="spacingAndGlyphs" >A</text><rect x="116" y="90" width="12.4" height="2.8" fill="#e30000" /><path d="M130.9 84.55 H135.1 L133 86.95Z" fill="#666"/><text x="97.30" y="105.80" font-family="'Liberation Sans'" font-size="8" fill="#666" textLength="15.60" lengthAdjust="spacingAndGlyphs" >Font</text><rect x="167.6" y="47" width="10.6" height="1" fill="#9a9a9a"/><rect x="167.6" y="50.5" width="10.6" height="1" fill="#9a9a9a"/><rect x="182.6" y="49.7" width="11.3" height="1" fill="#999"/><rect x="183.4" y="52.4" width="9.7" height="1" fill="#999"/><rect x="183.4" y="54.6" width="9.7" height="1" fill="#999"/><rect x="196.4" y="45" width="15" height="15.75" fill="#c6c6c6" /><rect x="198" y="52" width="11.5" height="1" fill="#777"/><rect x="198" y="54" width="11.5" height="1" fill="#777"/><rect x="198" y="56" width="11.5" height="1" fill="#777"/><rect x="198" y="58" width="11.5" height="1" fill="#777"/><g transform="translate(215.75,47.6)"><rect x="0.5" y="0.5" width="7.5" height="10.2" fill="#fff" stroke="#7a7a7a" stroke-width="0.9"/><path d="M2 3 H6.5 M2 5.5 H6.5 M2 8 H5" stroke="#7a7a7a" stroke-width="0.9"/><path d="M7.5 2.5 H9.5 A2.2 2.2 0 0 1 9.5 6.9 H7.8" fill="none" stroke="#3b6ea5" stroke-width="1.3"/><path d="M9 5.5 L7.5 6.9 L9 8.3" fill="none" stroke="#3b6ea5" stroke-width="1"/></g><rect x="168.25" y="66" width="9.4" height="1" fill="#888"/><rect x="168.25" y="68" width="7" height="1" fill="#888"/><rect x="168.25" y="70" width="9.4" height="1" fill="#888"/><rect x="168.25" y="72" width="7" height="1" fill="#888"/><rect x="183.9" y="66" width="9.4" height="1" fill="#888"/><rect x="185.1" y="68" width="6.999999999999999" height="1" fill="#888"/><rect x="183.9" y="70" width="9.4" height="1" fill="#888"/><rect x="185.1" y="72" width="6.999999999999999" height="1" fill="#888"/><rect x="199.5" y="66" width="8.8" height="1" fill="#888"/><rect x="201.9" y="68" width="6.4" height="1" fill="#888"/><rect x="199.5" y="70" width="8.8" height="1" fill="#888"/><rect x="201.9" y="72" width="6.4" height="1" fill="#888"/><g transform="translate(215,63.9)"><rect x="0.5" y="0.5" width="11.5" height="10.7" fill="#fff" stroke="#6e6e6e" stroke-width="0.9"/><path d="M0.5 3 H12 M0.5 8.6 H12" stroke="#6e6e6e" stroke-width="0.9"/><path d="M2.5 5.8 H9.5" stroke="#555" stroke-width="0.9"/><path d="M3.5 4.5 L2 5.8 L3.5 7.1 M8.5 4.5 L10 5.8 L8.5 7.1" fill="none" stroke="#555" stroke-width="0.9"/></g><path d="M230.5 67.8 H234.7 L232.6 70.2Z" fill="#666"/><g transform="translate(167,80.75)"><rect x="2" y="0.5" width="9" height="1" fill="#aaa"/><rect x="6" y="2.6" width="5" height="1" fill="#aaa"/><rect x="6" y="4.7" width="5" height="1" fill="#aaa"/><rect x="6" y="6.8" width="5" height="1" fill="#aaa"/><rect x="2" y="8.9" width="9" height="1" fill="#aaa"/><circle cx="3.3" cy="4.9" r="3" fill="#dfe8f2"/><path d="M5.2 4.9 H1.3 M3.1 3 L1.2 4.9 L3.1 6.8" fill="none" stroke="#3d5f86" stroke-width="1.5"/></g><g transform="translate(182.6,80.75)"><rect x="2" y="0.5" width="9" height="1" fill="#aaa"/><rect x="6" y="2.6" width="5" height="1" fill="#aaa"/><rect x="6" y="4.7" width="5" height="1" fill="#aaa"/><rect x="6" y="6.8" width="5" height="1" fill="#aaa"/><rect x="2" y="8.9" width="9" height="1" fill="#aaa"/><circle cx="3.3" cy="4.9" r="3" fill="#dfe8f2"/><path d="M1.2 4.9 H5.1 M3.3 3 L5.2 4.9 L3.3 6.8" fill="none" stroke="#3d5f86" stroke-width="1.5"/></g><rect x="198" y="80" width="1" height="12" fill="#e2e2e2" /><rect x="226.4" y="80" width="1" height="12" fill="#e2e2e2" /><text x="0" y="0" font-family="Liberation Sans" font-size="8" fill="#555" transform="translate(206.5,91) rotate(-50)">ab</text><path d="M208.5 93 L215.5 85.5" stroke="#666" stroke-width="0.9"/><path d="M213.3 85.5 H215.8 V88" fill="none" stroke="#666" stroke-width="0.9"/><path d="M217.4 84.8 H221.6 L219.5 87.2Z" fill="#666"/><g transform="translate(232,83)"><path d="M0.5 0.5 L3.5 3 L0.5 5.5Z" fill="#555"/><path d="M5 0.5 H9 M7.5 0.5 V6 M6.3 0.5 A1.6 1.6 0 0 0 6.3 3.7" stroke="#555" stroke-width="1" fill="none"/></g><path d="M246.15 84.8 H250.35 L248.25 87.2Z" fill="#666"/><text x="186.00" y="105.80" font-family="'Liberation Sans'" font-size="8" fill="#666" textLength="35.30" lengthAdjust="spacingAndGlyphs" >Alignment</text><rect x="263" y="45.8" width="20.5" height="20.6" fill="#fbfbfb" stroke="#e8e8e8" stroke-width="0.8"/><text x="268.70" y="60.70" font-family="'Liberation Sans'" font-size="10.8" fill="#555" textLength="9.80" lengthAdjust="spacingAndGlyphs" >%</text><text x="257.40" y="79.50" font-family="'Liberation Sans'" font-size="9.3" fill="#444" textLength="32.80" lengthAdjust="spacingAndGlyphs" >Number</text><path d="M271.9 86.8 H276.1 L274 89.2Z" fill="#666"/><g transform="translate(297,47.5)"><rect x="0.5" y="0.5" width="10.5" height="8.5" fill="#fff" stroke="#8a8a8a" stroke-width="0.9"/><path d="M0.5 3.3 H11 M0.5 6.1 H11 M4 0.5 V9" stroke="#b0b0b0" stroke-width="0.8"/><rect x="1" y="1" width="2.8" height="5" fill="#6e6e6e"/><rect x="5.5" y="5.5" width="6" height="5" fill="#fff" stroke="#7a7a7a" stroke-width="0.9"/><path d="M7 8.2 L8.2 9.2 L10.2 7" fill="none" stroke="#444" stroke-width="0.9"/></g><g transform="translate(297,64.3)"><rect x="0.5" y="0.5" width="10.5" height="9.5" fill="#fff" stroke="#8a8a8a" stroke-width="0.9"/><rect x="1" y="3" width="9.5" height="6.5" fill="#c9d6e6"/><path d="M0.5 3 H11 M0.5 5.5 H11 M0.5 8 H11 M4 0.5 V10" stroke="#9aa7b8" stroke-width="0.7"/><path d="M11.5 1.5 L5.5 8" stroke="#6a6a6a" stroke-width="1.8"/><path d="M5.5 8 L3.5 10.5" stroke="#3b6ea5" stroke-width="1.8"/></g><g transform="translate(297,79.5)"><rect x="0.5" y="0.5" width="10.5" height="9.5" fill="#e4e4e4" stroke="#8a8a8a" stroke-width="0.9"/><rect x="1" y="1" width="9.5" height="3" fill="#c4c4c4"/><path d="M11.5 2 L5.5 8.5" stroke="#6a6a6a" stroke-width="1.8"/><path d="M5.5 8.5 L3.5 11" stroke="#3b6ea5" stroke-width="1.8"/></g><text x="309.80" y="56.00" font-family="'Liberation Sans'" font-size="9.3" fill="#444" textLength="92.40" lengthAdjust="spacingAndGlyphs" >Conditional Formatting</text><path d="M404.0 50.3 H408.0 L406 52.7Z" fill="#666"/><text x="309.80" y="71.80" font-family="'Liberation Sans'" font-size="9.3" fill="#444" textLength="62.60" lengthAdjust="spacingAndGlyphs" >Format as Table</text><path d="M374.3 66.8 H378.3 L376.3 69.2Z" fill="#666"/><text x="309.70" y="88.30" font-family="'Liberation Sans'" font-size="9.3" fill="#444" textLength="41.00" lengthAdjust="spacingAndGlyphs" >Cell Styles</text><path d="M352.0 83.3 H356.0 L354 85.7Z" fill="#666"/><text x="343.40" y="106.00" font-family="'Liberation Sans'" font-size="8" fill="#666" textLength="20.00" lengthAdjust="spacingAndGlyphs" >Styles</text><rect x="419" y="45.5" width="21.25" height="21.5" fill="#fbfbfb" stroke="#e8e8e8" stroke-width="0.8"/><rect x="425.5" y="53.5" width="10" height="7" fill="#fff" stroke="#777" stroke-width="0.9"/><path d="M425 51.5 H434 M425.5 51 V62.5 M425 62 H433 M429 60.5 V62.5 M425 55 H435.5 M425 59 H435.5 M427.5 53.5 V60.5 M433 53.5 V60.5" fill="none" stroke="#8a8a8a" stroke-width="0.8"/><rect x="428" y="55" width="4.5" height="3.8" fill="#4f5862"/><text x="420.40" y="79.50" font-family="'Liberation Sans'" font-size="9.3" fill="#444" textLength="19.70" lengthAdjust="spacingAndGlyphs" >Cells</text><path d="M428.15 86.8 H432.35 L430.25 89.2Z" fill="#666"/><rect x="451" y="45.5" width="21.1" height="21.5" fill="#fbfbfb" stroke="#e8e8e8" stroke-width="0.8"/><g transform="translate(456.5,51)"><circle cx="7.3" cy="4.3" r="3.6" fill="none" stroke="#3f5f85" stroke-width="1.5"/><path d="M4.6 7 L0.8 10.8" stroke="#3f5f85" stroke-width="1.8"/></g><text x="447.90" y="79.50" font-family="'Liberation Sans'" font-size="9.3" fill="#444" textLength="28.10" lengthAdjust="spacingAndGlyphs" >Editing</text><path d="M459.4 86.8 H463.6 L461.5 89.2Z" fill="#666"/><path d="M496.5 105 L500 101.5 L503.5 105" fill="none" stroke="#555" stroke-width="1.2"/><rect x="0" y="110" width="510" height="27" fill="#e6e6e6" /><rect x="5" y="118" width="74" height="16" fill="#fff" stroke="#d9d9d9" stroke-width="0.8"/><text x="7.80" y="129.60" font-family="'Liberation Sans'" font-size="10.4" fill="#444" textLength="11.30" lengthAdjust="spacingAndGlyphs" >A1</text><path d="M70.2 124.8 H74.39999999999999 L72.3 127.2Z" fill="#555"/><circle cx="90.8" cy="122.5" r="0.8" fill="#999"/><circle cx="90.8" cy="126" r="0.8" fill="#999"/><circle cx="90.8" cy="129.5" r="0.8" fill="#999"/><rect x="102.7" y="117.7" width="81.6" height="16.3" fill="#fff"/><path d="M111.5 122.6 L119.5 129.7 M119.5 122.6 L111.5 129.7" stroke="#c2c2c2" stroke-width="1.1"/><path d="M138 126.5 L141.5 129.8 L148 123" fill="none" stroke="#c2c2c2" stroke-width="1.1"/><text x="164" y="130" font-family="Liberation Serif" font-style="italic" font-size="11" fill="#666" textLength="9.5" lengthAdjust="spacingAndGlyphs">fx</text><rect x="184" y="117.7" width="1" height="16.3" fill="#d8d8d8" /><rect x="185.5" y="117.7" width="320" height="16.3" fill="#fff" /><text x="193.50" y="129.70" font-family="'Liberation Sans'" font-size="10.4" fill="#444" textLength="50.00" lengthAdjust="spacingAndGlyphs" >A Company</text><path d="M495.5 124.5 L499 128 L502.5 124.5" fill="none" stroke="#666" stroke-width="1.2"/><rect x="0" y="134" width="510" height="0" fill="#e6e6e6" /><rect x="0" y="137" width="510" height="24" fill="#e6e6e6" /><rect x="0" y="161" width="31.5" height="237" fill="#e6e6e6" /><rect x="31.5" y="161" width="462.5" height="237" fill="#ffffff" /><rect x="31.5" y="181" width="462.5" height="1" fill="#dadada" /><rect x="0" y="181" width="30.5" height="1" fill="#cbcbcb" /><rect x="31.5" y="202" width="462.5" height="1" fill="#dadada" /><rect x="0" y="202" width="30.5" height="1" fill="#cbcbcb" /><rect x="31.5" y="222" width="462.5" height="1" fill="#dadada" /><rect x="0" y="222" width="30.5" height="1" fill="#cbcbcb" /><rect x="31.5" y="242" width="462.5" height="1" fill="#dadada" /><rect x="0" y="242" width="30.5" height="1" fill="#cbcbcb" /><rect x="31.5" y="262" width="462.5" height="1" fill="#dadada" /><rect x="0" y="262" width="30.5" height="1" fill="#cbcbcb" /><rect x="31.5" y="282" width="462.5" height="1" fill="#dadada" /><rect x="0" y="282" width="30.5" height="1" fill="#cbcbcb" /><rect x="31.5" y="301" width="462.5" height="1" fill="#dadada" /><rect x="0" y="301" width="30.5" height="1" fill="#cbcbcb" /><rect x="31.5" y="321" width="462.5" height="1" fill="#dadada" /><rect x="0" y="321" width="30.5" height="1" fill="#cbcbcb" /><rect x="31.5" y="341" width="462.5" height="1" fill="#dadada" /><rect x="0" y="341" width="30.5" height="1" fill="#cbcbcb" /><rect x="31.5" y="361" width="462.5" height="1" fill="#dadada" /><rect x="0" y="361" width="30.5" height="1" fill="#cbcbcb" /><rect x="31.5" y="380" width="462.5" height="1" fill="#dadada" /><rect x="0" y="380" width="30.5" height="1" fill="#cbcbcb" /><rect x="114" y="161" width="1" height="237" fill="#dadada" /><rect x="114" y="144" width="1" height="17" fill="#c4c4c4" /><rect x="192" y="161" width="1" height="237" fill="#dadada" /><rect x="192" y="144" width="1" height="17" fill="#c4c4c4" /><rect x="264" y="161" width="1" height="237" fill="#dadada" /><rect x="264" y="144" width="1" height="17" fill="#c4c4c4" /><rect x="336" y="161" width="1" height="237" fill="#dadada" /><rect x="336" y="144" width="1" height="17" fill="#c4c4c4" /><rect x="407" y="161" width="1" height="237" fill="#dadada" /><rect x="407" y="144" width="1" height="17" fill="#c4c4c4" /><rect x="479" y="161" width="1" height="237" fill="#dadada" /><rect x="479" y="144" width="1" height="17" fill="#c4c4c4" /><rect x="0" y="160" width="494" height="1" fill="#bfbfbf" /><rect x="30.5" y="144" width="1" height="254" fill="#bdbdbd" /><path d="M29.0 144 V159.5 H14.0Z" fill="#bababa"/><text x="72.50" y="156.80" font-family="'Liberation Sans'" font-size="15.4" fill="#222" text-anchor="middle" >A</text><text x="152.95" y="156.80" font-family="'Liberation Sans'" font-size="15.4" fill="#222" text-anchor="middle" >B</text><text x="228.40" y="156.80" font-family="'Liberation Sans'" font-size="15.4" fill="#222" text-anchor="middle" >C</text><text x="300.00" y="156.80" font-family="'Liberation Sans'" font-size="15.4" fill="#222" text-anchor="middle" >D</text><text x="371.40" y="156.80" font-family="'Liberation Sans'" font-size="15.4" fill="#222" text-anchor="middle" >E</text><text x="442.95" y="156.80" font-family="'Liberation Sans'" font-size="15.4" fill="#222" text-anchor="middle" >F</text><text x="15.75" y="176.70" font-family="'Liberation Sans'" font-size="15.4" fill="#222" text-anchor="middle" >1</text><text x="15.75" y="197.70" font-family="'Liberation Sans'" font-size="15.4" fill="#222" text-anchor="middle" >2</text><text x="15.75" y="218.20" font-family="'Liberation Sans'" font-size="15.4" fill="#222" text-anchor="middle" >3</text><text x="15.75" y="237.90" font-family="'Liberation Sans'" font-size="15.4" fill="#222" text-anchor="middle" >4</text><text x="15.75" y="257.70" font-family="'Liberation Sans'" font-size="15.4" fill="#222" text-anchor="middle" >5</text><text x="15.75" y="277.40" font-family="'Liberation Sans'" font-size="15.4" fill="#222" text-anchor="middle" >6</text><text x="15.75" y="297.10" font-family="'Liberation Sans'" font-size="15.4" fill="#222" text-anchor="middle" >7</text><text x="15.75" y="316.70" font-family="'Liberation Sans'" font-size="15.4" fill="#222" text-anchor="middle" >8</text><text x="15.75" y="336.40" font-family="'Liberation Sans'" font-size="15.4" fill="#222" text-anchor="middle" >9</text><text x="15.75" y="356.40" font-family="'Liberation Sans'" font-size="15.4" fill="#222" text-anchor="middle" >10</text><text x="15.75" y="375.90" font-family="'Liberation Sans'" font-size="15.4" fill="#222" text-anchor="middle" >11</text><text x="15.75" y="395.70" font-family="'Liberation Sans'" font-size="15.4" fill="#222" text-anchor="middle" >12</text><text x="33.80" y="177.20" font-family="'Liberation Sans'" font-size="14.6" fill="#111" textLength="77.67" lengthAdjust="spacingAndGlyphs" stroke="#111" stroke-width="0.3">A Company</text><text x="115.80" y="177.20" font-family="'Liberation Sans'" font-size="14.6" fill="#111" textLength="75.05" lengthAdjust="spacingAndGlyphs" stroke="#111" stroke-width="0.3">John Smith</text><text x="202.55" y="177.20" font-family="'Liberation Sans'" font-size="14.6" fill="#111" textLength="59.55" lengthAdjust="spacingAndGlyphs" stroke="#111" stroke-width="0.3">1200000</text><text x="33.80" y="198.20" font-family="'Liberation Sans'" font-size="14.6" fill="#111" textLength="38.31" lengthAdjust="spacingAndGlyphs" stroke="#111" stroke-width="0.3">C &amp; D</text><text x="115.80" y="198.20" font-family="'Liberation Sans'" font-size="14.6" fill="#111" textLength="75.05" lengthAdjust="spacingAndGlyphs" stroke="#111" stroke-width="0.3">John Smith</text><text x="211.05" y="198.20" font-family="'Liberation Sans'" font-size="14.6" fill="#111" textLength="51.05" lengthAdjust="spacingAndGlyphs" stroke="#111" stroke-width="0.3">350000</text><rect x="494" y="137" width="16" height="261" fill="#e6e6e6" /><rect x="494" y="161" width="1" height="237" fill="#c9c9c9" /><rect x="497" y="144" width="11" height="10.5" fill="#ffffff" /><rect x="497" y="154.5" width="11" height="0.8" fill="#cfcfcf" /><path d="M499.5 151 L502.5 148 L505.5 151Z" fill="#555"/><rect x="497" y="155" width="11" height="138.7" fill="#ffffff" /><rect x="497" y="293.7" width="11" height="95.30000000000001" fill="#dcdcdc" /><rect x="497" y="389" width="11" height="8.8" fill="#ffffff" /><path d="M499.5 392 L502.5 395 L505.5 392Z" fill="#555"/><rect x="229.5" y="369.2" width="243.3" height="21.1" fill="#c0c0c0" /><text x="229.50" y="385.00" font-family="'Liberation Mono'" font-size="16" fill="#1a1a1a" textLength="241.00" lengthAdjust="spacingAndGlyphs" stroke="#1a1a1a" stroke-width="0.35">Destination_Workbook.xlsx</text><rect x="0" y="398" width="510" height="17" fill="#e4e4e4" /><rect x="0" y="398" width="510" height="1" fill="#bdbdbd" /><rect x="0" y="415" width="510" height="1" fill="#d0d0d0" /><path d="M21.8 402.8 L18.3 405.6 L21.8 408.4Z" fill="#c2c2c2"/><path d="M34 402.8 L37.5 405.6 L34 408.4Z" fill="#c2c2c2"/><rect x="62.2" y="398" width="47.099999999999994" height="15.5" fill="#ffffff" /><rect x="62.2" y="398" width="1" height="15.5" fill="#c8c8c8" /><rect x="108.3" y="398" width="1" height="15.5" fill="#9a9a9a" /><rect x="62.2" y="411.5" width="47.099999999999994" height="2" fill="#4f8a6e" /><text x="68.90" y="407.80" font-family="'Liberation Sans'" font-size="10.4" fill="#2f6f4f" font-weight="700" textLength="32.70" lengthAdjust="spacingAndGlyphs" >Sheet1</text><text x="118.10" y="408.20" font-family="'Liberation Sans'" font-size="10.2" fill="#666" textLength="89.60" lengthAdjust="spacingAndGlyphs" >Evaluation Warning</text><rect x="216.6" y="401" width="1" height="12" fill="#b5b5b5" /><circle cx="242" cy="406.8" r="6" fill="none" stroke="#7a7a7a" stroke-width="1.1"/><path d="M242 403.3 V410.3 M238.5 406.8 H245.5" stroke="#6a6a6a" stroke-width="1.3"/><circle cx="305.5" cy="402.5" r="0.8" fill="#aaa"/><circle cx="305.5" cy="406" r="0.8" fill="#aaa"/><circle cx="305.5" cy="409.5" r="0.8" fill="#aaa"/><rect x="315.8" y="401.4" width="178.2" height="10.2" fill="#dcdcdc" /><rect x="315.8" y="401.4" width="10.2" height="10.2" fill="#ffffff" /><path d="M322.5 403.5 L319 406.5 L322.5 409.5Z" fill="#555"/><rect x="326.75" y="401.4" width="116.75" height="10.2" fill="#ffffff" /><rect x="484.2" y="401.4" width="9.8" height="10.2" fill="#ffffff" /><path d="M487.5 403.5 L491 406.5 L487.5 409.5Z" fill="#555"/><rect x="0" y="416" width="510" height="15" fill="#f0f0f0" /><text x="4.50" y="425.60" font-family="'Liberation Sans'" font-size="8.2" fill="#555" textLength="21.80" lengthAdjust="spacingAndGlyphs" >Ready</text><rect x="298.6" y="416" width="23.6" height="15" fill="#c9c9c9" /><g transform="translate(306,418.6)"><rect x="0.5" y="0.5" width="8" height="7.5" fill="none" stroke="#666" stroke-width="0.9"/><path d="M0.5 3 H8.5 M0.5 5.5 H8.5 M3.2 0.5 V8 M5.8 0.5 V8" stroke="#666" stroke-width="0.9"/></g><g transform="translate(330.3,418.6)"><rect x="0.5" y="0.5" width="8" height="7.5" fill="none" stroke="#777" stroke-width="0.9"/><path d="M2.5 0.5 V8 M4.5 0.5 V8 M6.5 0.5 V8" stroke="#888" stroke-width="0.8"/></g><g transform="translate(355,418.6)"><rect x="0.5" y="0.5" width="8" height="7.5" fill="none" stroke="#777" stroke-width="0.9"/><path d="M3.5 0.5 V4.5 H8.5" fill="none" stroke="#777" stroke-width="0.9"/></g><rect x="374.3" y="422.3" width="6" height="1.6" fill="#666" /><rect x="382.4" y="422.8" width="74" height="0.9" fill="#a0a0a0" /><rect x="425.5" y="419.5" width="3.3" height="7.1" fill="#666" /><path d="M462.9 419.5 V426.6 M459.4 423 H466.4" stroke="#555" stroke-width="1.6"/><text x="476.10" y="425.80" font-family="'Liberation Sans'" font-size="8.2" fill="#777" textLength="21.20" lengthAdjust="spacingAndGlyphs" >150 %</text><rect x="0" y="431" width="510" height="1" fill="#8c8c8c" /><rect x="0" y="42" width="1" height="390" fill="#d2ecee" /></svg></div></body></html>
